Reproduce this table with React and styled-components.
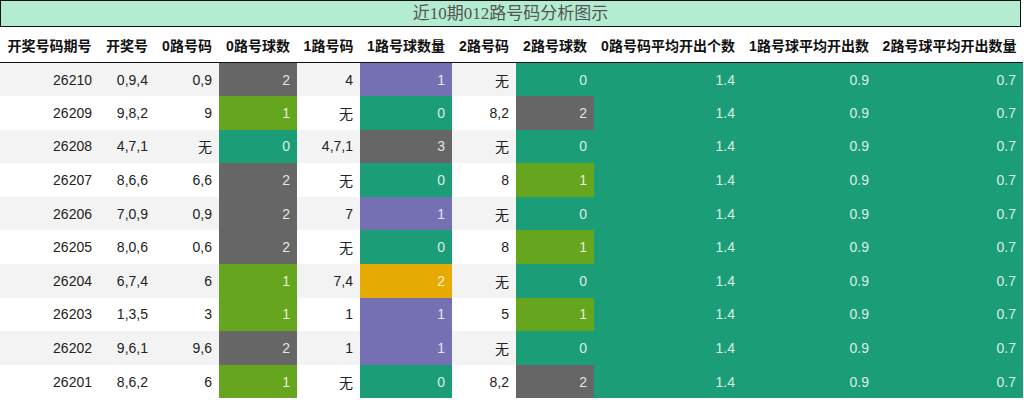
import React from 'react'
import styled, { createGlobalStyle } from 'styled-components'

const GlobalStyle = createGlobalStyle`
  body {
    margin: 0;
    background: #fff;
    font-family: "Liberation Sans", "Noto Sans CJK SC", sans-serif;
  }
`

const TEAL = '#1b9e77'
const GREEN = '#66a61e'
const PURPLE = '#7570b3'
const GREY = '#666666'
const GOLD = '#e6ab02'

// colour scales per count column (value -> fill)
const zeroScale = { 0: TEAL, 1: GREEN, 2: GREY }
const oneScale = { 0: TEAL, 1: PURPLE, 2: GOLD, 3: GREY }
const twoScale = { 0: TEAL, 1: GREEN, 2: GREY }

const widths = [99, 56, 64, 78, 63, 92, 64, 78, 148, 134, 147]

const headers = [
  '开奖号码期号', '开奖号', '0路号码', '0路号球数', '1路号码', '1路号球数量',
  '2路号码', '2路号球数', '0路号码平均开出个数', '1路号球平均开出数', '2路号球平均开出数量',
]

const rows = [
  ['26210', '0,9,4', '0,9', 2, '4', 1, '无', 0],
  ['26209', '9,8,2', '9', 1, '无', 0, '8,2', 2],
  ['26208', '4,7,1', '无', 0, '4,7,1', 3, '无', 0],
  ['26207', '8,6,6', '6,6', 2, '无', 0, '8', 1],
  ['26206', '7,0,9', '0,9', 2, '7', 1, '无', 0],
  ['26205', '8,0,6', '0,6', 2, '无', 0, '8', 1],
  ['26204', '6,7,4', '6', 1, '7,4', 2, '无', 0],
  ['26203', '1,3,5', '3', 1, '1', 1, '5', 1],
  ['26202', '9,6,1', '9,6', 2, '1', 1, '无', 0],
  ['26201', '8,6,2', '6', 1, '无', 0, '8,2', 2],
]

const App = () => {
  return (
    <Page>
      <GlobalStyle />
      <Title>近10期012路号码分析图示</Title>
      <Table>
        <colgroup>
          {widths.map((w, i) => <Col key={i} $w={w} />)}
        </colgroup>
        <thead>
          <tr>
            {headers.map(h => <TH key={h}>{h}</TH>)}
          </tr>
        </thead>
        <tbody>
          {rows.map(r => (
            <Row key={r[0]}>
              <TD>{r[0]}</TD>
              <TD>{r[1]}</TD>
              <TD>{r[2]}</TD>
              <Fill $bg={zeroScale[r[3]]}>{r[3]}</Fill>
              <TD>{r[4]}</TD>
              <Fill $bg={oneScale[r[5]]}>{r[5]}</Fill>
              <TD>{r[6]}</TD>
              <Fill $bg={twoScale[r[7]]}>{r[7]}</Fill>
              <Fill $bg={TEAL}>1.4</Fill>
              <Fill $bg={TEAL}>0.9</Fill>
              <Fill $bg={TEAL}>0.7</Fill>
            </Row>
          ))}
        </tbody>
      </Table>
    </Page>
  )
}

export default App

const Page = styled.div`
  width: 1024px;
  height: 400px;
  overflow: hidden;
`

const Title = styled.div`
  width: 1019px;
  height: 25px;
  border: 1px solid #111;
  background: #b3ecd0;
  color: #555;
  font-family: "Liberation Serif", "Noto Sans CJK SC", serif;
  font-size: 17px;
  line-height: 26px;
  text-align: center;
`

const Table = styled.table`
  width: 1023px;
  table-layout: fixed;
  border-collapse: collapse;
  border-spacing: 0;
  font-size: 14px;
  color: #222;
`

const Col = styled.col`
  width: ${p => p.$w}px;
`

const TH = styled.th`
  height: 35px;
  padding: 0;
  font-weight: bold;
  color: #111;
  text-align: center;
  white-space: nowrap;
  border-bottom: 1px solid #111;
`

const Row = styled.tr`
  height: 33.6px;
  background: #fff;
  &:nth-child(odd) {
    background: #f3f3f3;
  }
`

const TD = styled.td`
  padding: 0 7px 0 0;
  text-align: right;
  white-space: nowrap;
`

const Fill = styled(TD)`
  background: ${p => p.$bg};
  color: rgba(255, 255, 255, 0.85);
`
